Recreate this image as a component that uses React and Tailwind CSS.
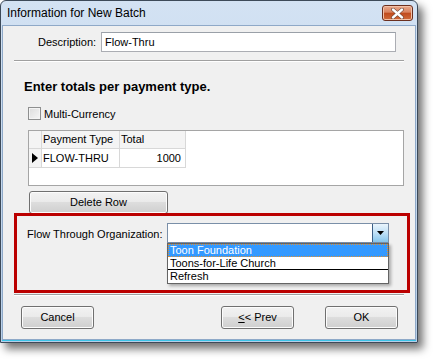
import React from 'react'

const font = { fontFamily: '"Liberation Sans", Arial, sans-serif' }

const btnCls =
  'flex items-center justify-center rounded-[3px] border border-[#707070] bg-[linear-gradient(#f2f2f2,#ebebeb_45%,#dddddd_50%,#cfcfcf)] text-[11px] text-black shadow-[inset_0_0_0_1px_#fcfcfc]'

function CloseButton() {
  return (
    <div className="flex h-[16px] w-[31px] items-center justify-center rounded-[3px] border border-[#6b2f1f] bg-[linear-gradient(#e9a98d,#d9825e_45%,#c04a1c_50%,#d06a3a)] shadow-[inset_0_0_0_1px_#f2c1a8]">
      <svg width="13" height="11" viewBox="0 0 13 11">
        <path d="M2 1.5 L11 9.5 M11 1.5 L2 9.5" stroke="#5a3a30" strokeWidth="3.6" strokeLinecap="round" />
        <path d="M2 1.5 L11 9.5 M11 1.5 L2 9.5" stroke="#ffffff" strokeWidth="2.4" strokeLinecap="round" />
      </svg>
    </div>
  )
}

export default function App() {
  return (
    <div className="h-[359px] w-[435px] bg-white" style={font}>
      <div className="flex h-[343px] w-[418px] flex-col rounded-t-[6px] border border-[#3d4a59] bg-[linear-gradient(#d3e2f3,#b8cfe8)] shadow-[5px_6px_8px_rgba(0,0,0,0.55)]">
        {/* Title bar */}
        <div className="flex h-[24px] items-center justify-between pl-[6px] pr-[4px]">
          <span className="text-[12px] text-black">Information for New Batch</span>
          <CloseButton />
        </div>

        {/* Client */}
        <div className="mx-[1px] mb-[2px] flex flex-1 flex-col border border-[#8fa9c8] bg-[#f0f0f0] px-[11px] shadow-[0_1px_0_#39c4e8]">
          {/* Description */}
          <div className="mt-[6px] flex items-center">
            <span className="ml-[24px] w-[63px] text-[11px] text-black">Description:</span>
            <div className="flex h-[20px] w-[295px] items-center border border-[#abadb3] border-t-[#9aa0a8] bg-white px-[3px] text-[11px] text-black">
              Flow-Thru
            </div>
          </div>

          <div className="mt-[8px] h-[2px] border-t border-b border-t-[#a0a0a0] border-b-white" />

          <div className="mt-[15px] text-[13px] font-bold text-black">
            <span className="ml-[10px]">Enter totals per payment type.</span>
          </div>

          {/* Multi-Currency */}
          <div className="mt-[9px] flex items-center pl-[14px]">
            <div className="h-[13px] w-[13px] border border-[#8e8f8f] bg-[linear-gradient(135deg,#dcdcdc,#f6f6f6)] shadow-[inset_0_0_0_1px_#f4f4f4]" />
            <span className="ml-[3px] text-[11px] text-black">Multi-Currency</span>
          </div>

          {/* Grid */}
          <div className="ml-[14px] mt-[8px] h-[56px] w-[376px] border border-[#a5a5a5] bg-white">
            <div className="flex h-[18px] text-[11px] text-black">
              <div className="w-[13px] border-r border-b border-[#d8d8d8] bg-[#f4f4f4]" />
              <div className="flex w-[78px] items-center border-r border-b border-[#d8d8d8] bg-[#f4f4f4] pl-[1px]">Payment Type</div>
              <div className="flex w-[66px] items-center border-r border-b border-[#d8d8d8] bg-[#f4f4f4] pl-[1px]">Total</div>
            </div>
            <div className="flex h-[19px] text-[11px] text-black">
              <div className="flex w-[13px] items-center justify-center border-r border-b border-[#d8d8d8] bg-[#f4f4f4]">
                <svg width="6" height="10" viewBox="0 0 6 10"><path d="M0 0 L6 5 L0 10 Z" fill="#000" /></svg>
              </div>
              <div className="flex w-[78px] items-center border-r border-b border-[#d8d8d8] pl-[1px]">FLOW-THRU</div>
              <div className="flex w-[66px] items-center justify-end border-r border-b border-[#d8d8d8] pr-[4px]">1000</div>
            </div>
          </div>

          {/* Delete Row */}
          <div className={`${btnCls} ml-[15px] mt-[5px] h-[23px] w-[139px]`}>Delete Row</div>

          {/* Flow Through box */}
          <div className="relative z-10 -mt-[1px] h-[80px] w-[396px] border-[3px] border-[#bb0000]">
            <div className="mt-[7px] flex items-start">
              <span className="ml-[10px] mt-[3px] w-[140px] text-[11px] text-black">Flow Through Organization:</span>
              <div className="flex flex-col">
                <div className="flex h-[20px] w-[222px] border border-[#7a8fa8] bg-white">
                  <div className="flex-1" />
                  <div className="flex h-[18px] w-[16px] items-center justify-center border-l border-[#3c5f86] bg-[linear-gradient(#eaf5fd,#bfe0f6_50%,#86c6ed)]">
                    <svg width="7" height="4" viewBox="0 0 7 4"><path d="M0 0 L7 0 L3.5 4 Z" fill="#000" /></svg>
                  </div>
                </div>
                <div className="flex h-[41px] w-[222px] flex-col border border-[#646464] bg-white text-[11px] text-black shadow-[2px_2px_3px_rgba(0,0,0,0.3)]">
                  <div className="flex h-[13px] items-center border border-dotted border-[#e09030] bg-[#3399ff] pl-[1px] text-white">Toon Foundation</div>
                  <div className="flex h-[13px] items-center border-b border-black pl-[2px]">Toons-for-Life Church</div>
                  <div className="flex h-[13px] items-center pl-[2px]">Refresh</div>
                </div>
              </div>
            </div>
          </div>

          <div className="mt-[1px] h-[2px] border-t border-b border-t-[#a0a0a0] border-b-white" />

          {/* Buttons */}
          <div className="mt-[10px] flex items-center">
            <div className={`${btnCls} ml-[7px] h-[23px] w-[73px]`}>Cancel</div>
            <div className={`${btnCls} ml-[127px] h-[23px] w-[73px]`}>
              <span className="underline">&lt;</span>&lt; Prev
            </div>
            <div className={`${btnCls} ml-[31px] h-[23px] w-[73px]`}>OK</div>
          </div>
        </div>
      </div>
    </div>
  )
}
